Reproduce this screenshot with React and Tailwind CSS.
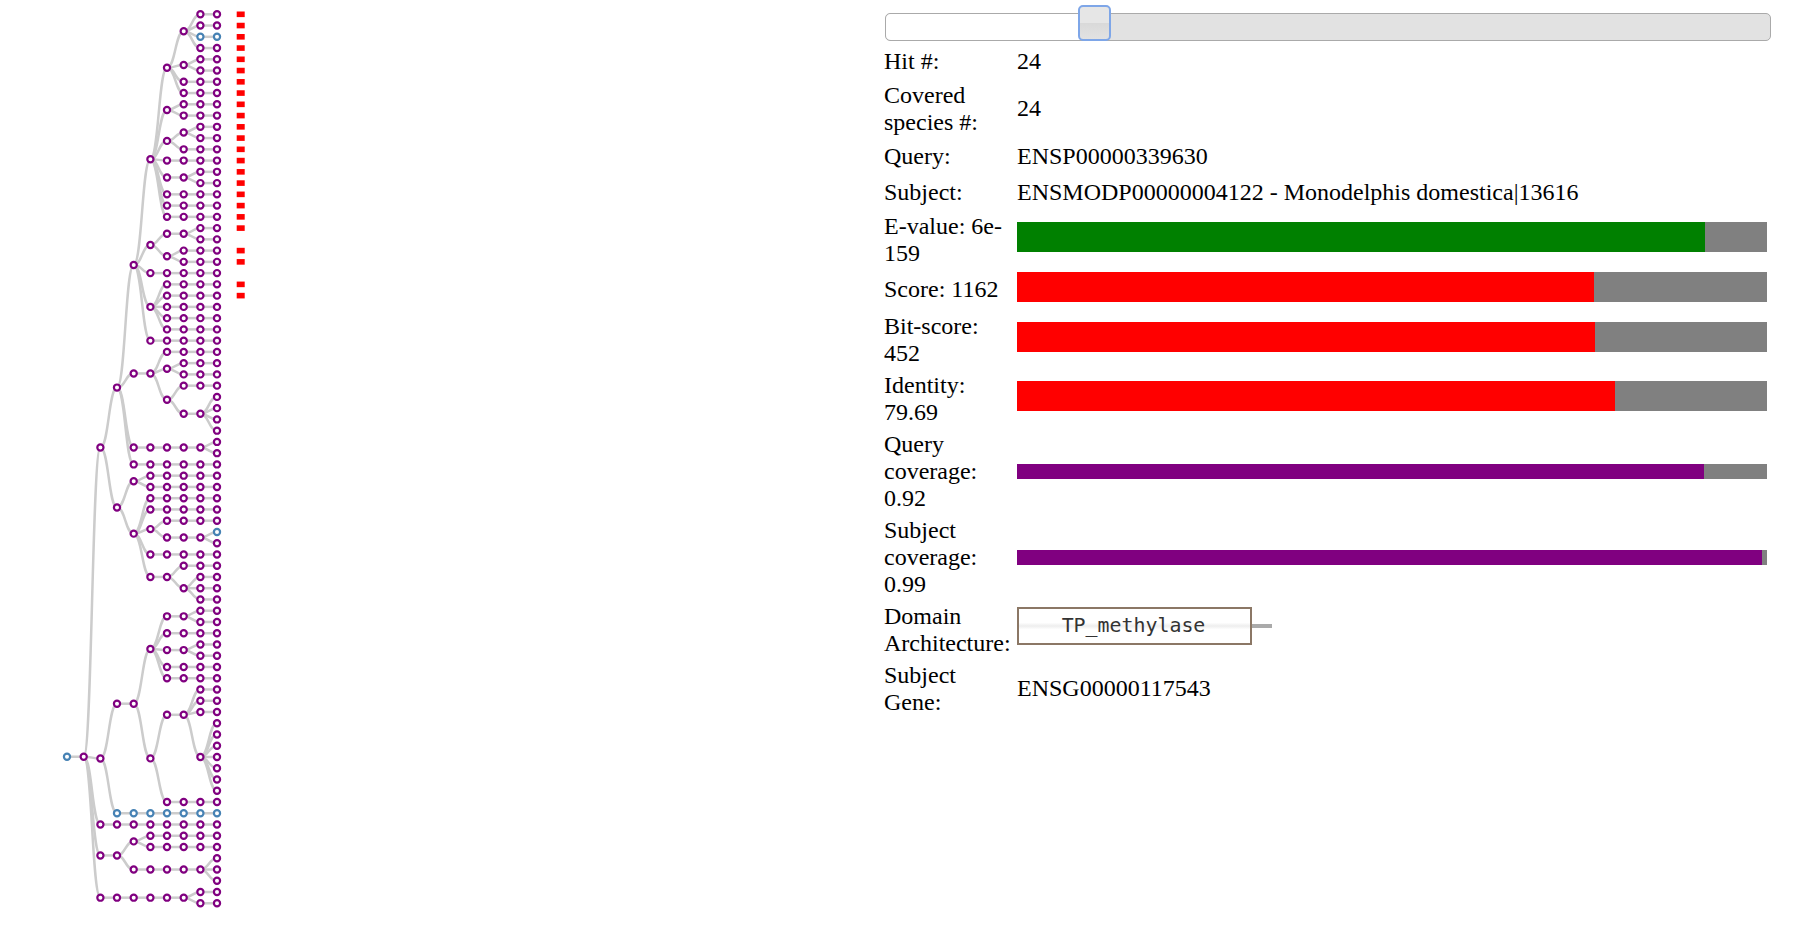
// Hit detail page: species tree on the left, BLAST hit details on the right

// ── Tree data ─────────────────────────────────────────────────────────────────

const COL_X = [67, 83.7, 100.4, 117, 133.7, 150.4, 167, 183.7, 200.4, 217];
const LEAF_Y = 14.3;
const LEAF_STEP = 11.253;
const LAST_COL = 9;

const L = { leaf: true };
const blue = (from) => ({ leaf: true, blueFrom: from });
const b = (col, ...children) => ({ col, children });

const TREE = b(1,
  b(2,
    b(3,
      b(4,
        b(5,
          b(6, b(7, L, L, blue(8), L), b(7, L, L), L, L),
          b(6, L, L),
          b(6, b(7, L, L), L),
          L,
          b(7, L, L),
          L, L, L,
        ),
        b(5, b(7, L, L), b(6, L, L)),
        L,
        b(5, L, L, L, L, L),
        L,
      ),
      b(5, L, b(6, L, L), b(6, L, b(8, L, L, L, L))),
      b(8, L, L),
      L,
    ),
    b(3,
      b(4, L, L),
      b(4, L, L, b(5, L, b(8, blue(9), L)), L, b(6, L, b(7, L, L, L))),
    ),
  ),
  b(2,
    b(4,
      b(5, b(7, L, L), L, b(7, L, L), L, L),
      b(5, b(7, L, L, L, b(8, L, L, L, L, L, L, L)), L),
    ),
    blue(3),
  ),
  L,
  b(3, b(4, L, L), b(8, L, L, L)),
  b(7, L, L),
);

const RED_ROWS = [...Array(20).keys(), 21, 22, 24, 25];

function layoutTree() {
  const circles = [];
  const links = [];
  let row = 0;

  const chain = (from, to, y, blueFrom = 99) => {
    for (let c = from; c <= to; c++) {
      circles.push({ x: COL_X[c], y, blue: c >= blueFrom || c === 0 });
      if (c > from) links.push({ x0: COL_X[c - 1], y0: y, x1: COL_X[c], y1: y });
    }
  };

  const place = (node, from) => {
    if (node.leaf) {
      const y = LEAF_Y + LEAF_STEP * row++;
      chain(from, LAST_COL, y, node.blueFrom);
      return y;
    }
    const ys = node.children.map((ch) => place(ch, node.col + 1));
    const y = ys.reduce((a, v) => a + v, 0) / ys.length;
    chain(from, node.col, y);
    ys.forEach((cy) => links.push({ x0: COL_X[node.col], y0: y, x1: COL_X[node.col + 1], y1: cy }));
    return y;
  };

  place(TREE, 0);
  return { circles, links };
}

function SpeciesTree() {
  const { circles, links } = layoutTree();
  return (
    <svg width="885" height="920" className="shrink-0 block">
      {links.map((l, i) => {
        const mx = (l.x0 + l.x1) / 2;
        return (
          <path key={i} d={`M${l.x0},${l.y0}C${mx},${l.y0} ${mx},${l.y1} ${l.x1},${l.y1}`}
            fill="none" stroke="#ccc" strokeWidth="2.5" />
        );
      })}
      {circles.map((c, i) => (
        <circle key={i} cx={c.x} cy={c.y} r="3.1" fill="#fff"
          stroke={c.blue ? 'steelblue' : 'purple'} strokeWidth="2.2" />
      ))}
      {RED_ROWS.map((r) => (
        <rect key={r} x="236.7" y={LEAF_Y + LEAF_STEP * r - 2.8} width="8" height="5.6" fill="red" />
      ))}
    </svg>
  );
}

// ── Detail rows ───────────────────────────────────────────────────────────────

function Row({ label, children }) {
  return (
    <div className="flex items-center py-[2.5px] min-h-[36px]">
      <div className="w-[133px] -ml-px shrink-0">{label}</div>
      <div className="flex-1 min-w-0">{children}</div>
    </div>
  );
}

function Bar({ value, color, thin }) {
  return (
    <div className={thin ? 'h-[16px] pt-px' : 'h-[36px] pt-[0.5px]'}>
      <div className={`flex w-[750px] bg-[#808080] ${thin ? 'h-[15px]' : 'h-[30px]'}`}>
        <div className={color} style={{ width: `${value}%` }} />
      </div>
    </div>
  );
}

function Slider() {
  return (
    <div className="relative h-[28px] w-[886px] mt-[13px] mb-[2px] rounded-[5px] border border-[#aaa] bg-[#e2e2e2]">
      <div className="h-full w-[200px] bg-white rounded-l-[5px]" />
      <div className="absolute left-[192px] top-[-9px] h-[36px] w-[33px] rounded-[5px] border-2 border-[#7ea6e8] bg-[linear-gradient(#e6e6e6_50%,#d9d9d9_50%,#e2e2e2)]" />
    </div>
  );
}

function DomainBox() {
  return (
    <div className="flex items-center h-[38px] mb-[7px]">
      <div className="flex items-center justify-center pr-[2px] w-[235px] h-full border-2 border-[#8b7765] bg-[linear-gradient(#fff_40%,#eee_50%,#fff_60%)] font-['DejaVu_Sans_Mono',monospace] text-[19.9px] leading-none text-[#333]">
        TP_methylase
      </div>
      <div className="w-[20px] h-[4px] bg-[#aaa]" />
    </div>
  );
}

export default function App() {
  return (
    <div className="flex bg-white text-black font-['Liberation_Serif',serif] text-[24px] leading-[27px]">
      <SpeciesTree />
      <div className="w-[886px]">
        <Slider />
        <Row label="Hit #:">24</Row>
        <Row label="Covered species #:">24</Row>
        <Row label="Query:">ENSP00000339630</Row>
        <Row label="Subject:">ENSMODP00000004122 - Monodelphis domestica|13616</Row>
        <Row label="E-value: 6e-159"><Bar value={91.73} color="bg-[#008000]" /></Row>
        <Row label="Score: 1162"><Bar value={76.9} color="bg-[#ff0000]" /></Row>
        <Row label="Bit-score: 452"><Bar value={77.1} color="bg-[#ff0000]" /></Row>
        <Row label="Identity: 79.69"><Bar value={79.69} color="bg-[#ff0000]" /></Row>
        <Row label="Query coverage: 0.92"><Bar thin value={91.6} color="bg-[#800080]" /></Row>
        <Row label="Subject coverage: 0.99"><Bar thin value={99.3} color="bg-[#800080]" /></Row>
        <Row label="Domain Architecture:"><DomainBox /></Row>
        <Row label="Subject Gene:">ENSG00000117543</Row>
      </div>
    </div>
  );
}
